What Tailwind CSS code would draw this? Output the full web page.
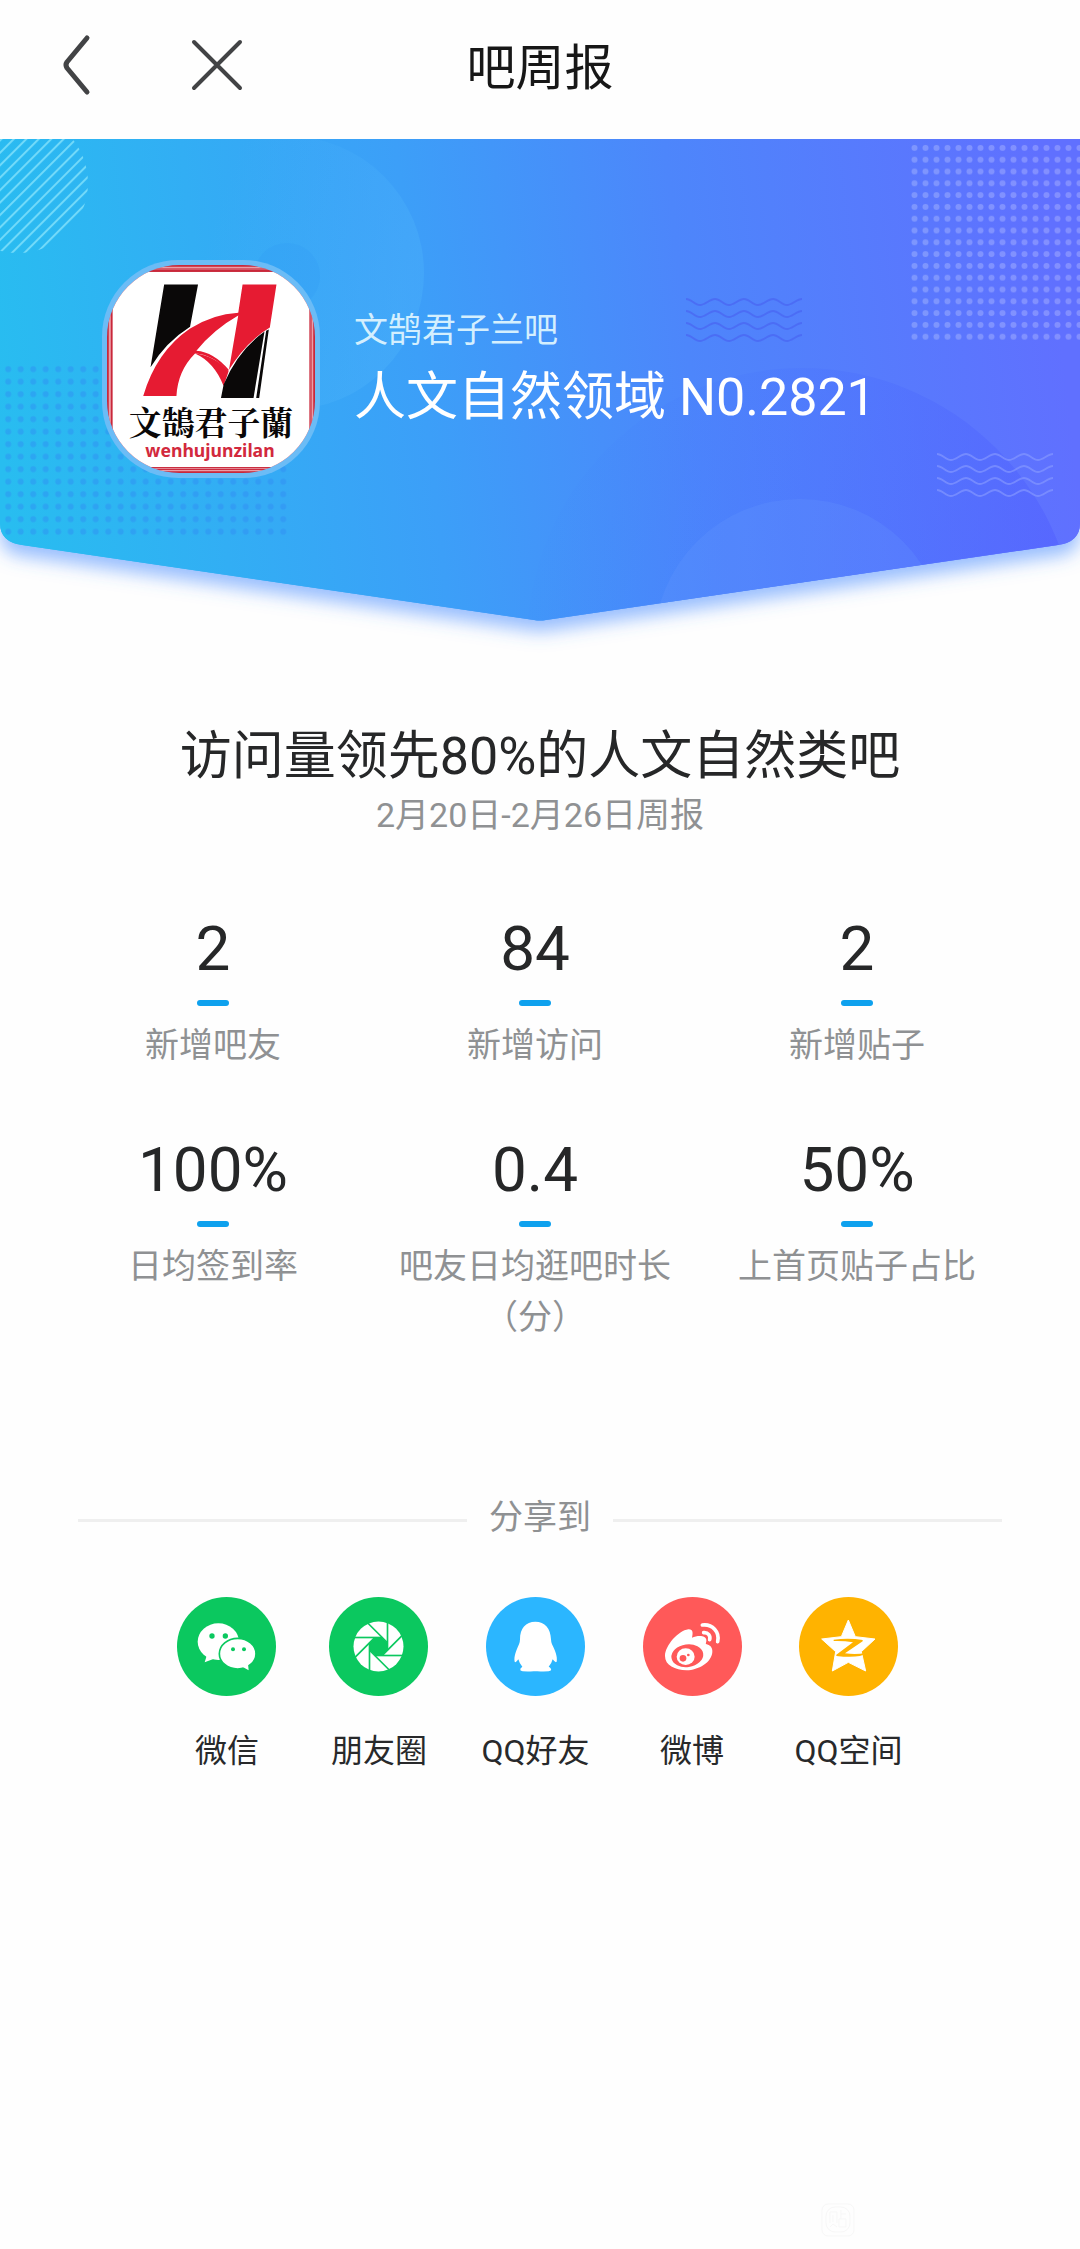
<!DOCTYPE html>
<html lang="zh-CN">
  <head>
    <meta charset="UTF-8" />
    <meta name="viewport" content="width=device-width, initial-scale=1.0" />
    <title>吧周报</title>
    <script src="https://cdn.jsdelivr.net/npm/@tailwindcss/browser@4"></script>
  </head>
  <body class="min-h-screen flex flex-col bg-[#fefefe] text-[#262728] font-[family-name:Roboto,'Noto_Sans_CJK_SC',sans-serif]">
    <!-- header -->
    <header class="grid grid-cols-[1fr_auto_1fr] items-center h-[139px] pb-[10px] px-12">
      <div class="flex items-center gap-20">
        <button type="button" aria-label="返回" class="w-14 h-16">
          <svg viewBox="0 0 56 64" fill="none" stroke="#424345" stroke-width="5" stroke-linecap="round" stroke-linejoin="round"><path d="M39 5 19 29Q17 32 19 35L39 59" /></svg>
        </button>
        <button type="button" aria-label="关闭" class="w-16 h-16">
          <svg viewBox="0 0 64 64" fill="none" stroke="#424345" stroke-width="4" stroke-linecap="round"><path d="M10 9 56 55M56 9 10 55" /></svg>
        </button>
      </div>
      <h1 class="pt-2 text-[49px] leading-[64px] text-[#171717]">吧周报</h1>
    </header>

    <main>
      <!-- banner -->
      <section class="grid">
        <svg class="[grid-area:1/1] w-full" viewBox="0 0 1080 521" aria-hidden="true">
          <defs>
            <linearGradient id="bg" gradientUnits="userSpaceOnUse" x1="0" y1="300" x2="1060" y2="180">
              <stop offset="0" stop-color="#28bdf0" />
              <stop offset="0.4" stop-color="#3c9ff8" />
              <stop offset="0.65" stop-color="#4d86fb" />
              <stop offset="1" stop-color="#6070ff" />
            </linearGradient>
            <linearGradient id="glow" x1="0" x2="1" y1="0" y2="0.3">
              <stop offset="0.3" stop-color="#4eb4fb" stop-opacity="0" />
              <stop offset="1" stop-color="#4eb4fb" stop-opacity="0.35" />
            </linearGradient>
            <linearGradient id="disc" x1="0" x2="1" y1="0" y2="0.2">
              <stop offset="0" stop-color="#3c7cff" stop-opacity="0" />
              <stop offset="1" stop-color="#4c58ff" stop-opacity="0.4" />
            </linearGradient>
            <filter id="shadow" x="-5%" y="-5%" width="110%" height="120%">
              <feDropShadow dx="0" dy="11" stdDeviation="9" flood-color="#4488ff" flood-opacity="0.55" />
            </filter>
            <pattern id="dotsDark" patternUnits="userSpaceOnUse" x="2" y="224" width="12.5" height="12.5"><circle cx="6.2" cy="6.2" r="3" fill="#2f87f3" fill-opacity="0.42" /></pattern>
            <pattern id="dotsLight" patternUnits="userSpaceOnUse" x="909" y="3" width="11" height="11.8"><circle cx="5.5" cy="5.9" r="3" fill="#fff" fill-opacity="0.22" /></pattern>
            <pattern id="stripes" patternUnits="userSpaceOnUse" width="8.8" height="8.8" patternTransform="rotate(45)"><path d="M1 0V9" stroke="#7ee0fb" stroke-opacity="0.85" stroke-width="2" /></pattern>
            <clipPath id="shape"><path d="M0 0H1080V384Q1080 403 1058 406L546 481Q540 482 534 481L22 406Q0 403 0 384Z" /></clipPath>
            <path id="waves" d="M0 0c5 0 9 6 14 6s10-6 15-6 9 6 14 6 10-6 15-6 9 6 14 6 10-6 15-6 9 6 14 6 10-6 15-6M0 12c5 0 9 6 14 6s10-6 15-6 9 6 14 6 10-6 15-6 9 6 14 6 10-6 15-6 9 6 14 6 10-6 15-6M0 24c5 0 9 6 14 6s10-6 15-6 9 6 14 6 10-6 15-6 9 6 14 6 10-6 15-6 9 6 14 6 10-6 15-6M0 36c5 0 9 6 14 6s10-6 15-6 9 6 14 6 10-6 15-6 9 6 14 6 10-6 15-6 9 6 14 6 10-6 15-6" />
          </defs>
          <path d="M0 0H1080V384Q1080 403 1058 406L546 481Q540 482 534 481L22 406Q0 403 0 384Z" fill="url(#bg)" filter="url(#shadow)" />
          <g clip-path="url(#shape)">
            <rect width="1080" height="490" fill="url(#bg)" />
            <circle cx="18" cy="44" r="70" fill="url(#stripes)" />
            <circle cx="287" cy="134" r="137" fill="url(#glow)" />
            <circle cx="287" cy="137" r="33" fill="#2f98f5" fill-opacity="0.2" />
            <circle cx="802" cy="504" r="275" fill="url(#disc)" />
            <circle cx="800" cy="506" r="146" fill="#6a9dff" fill-opacity="0.22" />
            <rect x="2" y="224" width="287" height="175" fill="url(#dotsDark)" />
            <rect x="909" y="3" width="171" height="200" fill="url(#dotsLight)" />
            <use href="#waves" x="686" y="160" fill="none" stroke="#4a68f2" stroke-opacity="0.8" stroke-width="2" />
            <use href="#waves" x="937" y="315" fill="none" stroke="#8a9dff" stroke-opacity="0.6" stroke-width="2" />
          </g>
        </svg>

        <div class="[grid-area:1/1] flex items-start gap-[34px] pt-[121px] pl-[102px]">
          <svg class="w-[218px] shrink-0" viewBox="36 45 656 656" role="img" aria-label="文鵠君子蘭">
            <clipPath id="avatar"><rect x="51" y="60" width="626" height="626" rx="218" /></clipPath>
            <rect x="36" y="45" width="656" height="656" rx="230" fill="#6bbcf6" />
            <g clip-path="url(#avatar)">
              <rect x="51" y="60" width="626" height="626" fill="#c9283b" />
              <rect x="58" y="67" width="612" height="612" fill="none" stroke="#f3b9c0" stroke-width="3" />
              <rect x="62" y="72" width="603" height="601" fill="none" stroke="#f3b9c0" stroke-width="2" />
              <rect x="68" y="81" width="592" height="587" fill="#fff" />
              <path d="M223 119H325L301 246Q228 292 182 368Z" fill="#0a0808" />
              <path d="M459 119H561L541 248Q470 290 415 380Q372 330 316 326Q264 378 260 454H160Q200 320 300 252Q370 208 446 204Z" fill="#e61b32" />
              <path d="M446 212Q372 254 320 318Q372 322 418 376L446 212Z" fill="#fff" />
              <path d="M316 326Q378 334 417 380L402 424Q374 352 316 326Z" fill="#e61b32" />
              <path d="M525 260 492 460H394L402 420Q444 318 525 260ZM538 254 509 460H500L530 258Z" fill="#0a0808" />
              <text x="364" y="572" text-anchor="middle" font-family="'Noto Serif CJK TC','Noto Sans CJK TC',serif" font-weight="700" font-size="99" fill="#0a0808">文鵠君子蘭</text>
              <text x="361" y="637" text-anchor="middle" font-family="'Noto Sans',sans-serif" font-weight="700" font-size="53" fill="#d2293d">wenhujunzilan</text>
            </g>
          </svg>
          <div class="pt-11 whitespace-nowrap">
            <p class="text-[34px] leading-[52px] text-[#d4effe]">文鹄君子兰吧</p>
            <p class="mt-1 text-[52px] leading-[76px] text-white">人文自然领域 N0.2821</p>
          </div>
        </div>
      </section>

      <!-- report -->
      <section class="mt-[63px] text-center">
        <h2 class="text-[52px] leading-[68px]">访问量领先80%的人文自然类吧</h2>
        <p class="text-[34px] leading-[48px] text-[#8f9193]">2月20日-2月26日周报</p>

        <dl class="grid grid-cols-3 gap-y-[60px] mt-[71px] pl-[52px] pr-[62px]">
          <div class="flex flex-col items-center">
            <dd class="text-[62px] leading-[78px]">2</dd>
            <dd class="w-8 h-[6px] mt-3 rounded-full bg-[#0ea1ee]"></dd>
            <dt class="mt-[14px] text-[34px] leading-[51px] text-[#8f9193]">新增吧友</dt>
          </div>
          <div class="flex flex-col items-center">
            <dd class="text-[62px] leading-[78px]">84</dd>
            <dd class="w-8 h-[6px] mt-3 rounded-full bg-[#0ea1ee]"></dd>
            <dt class="mt-[14px] text-[34px] leading-[51px] text-[#8f9193]">新增访问</dt>
          </div>
          <div class="flex flex-col items-center">
            <dd class="text-[62px] leading-[78px]">2</dd>
            <dd class="w-8 h-[6px] mt-3 rounded-full bg-[#0ea1ee]"></dd>
            <dt class="mt-[14px] text-[34px] leading-[51px] text-[#8f9193]">新增贴子</dt>
          </div>
          <div class="flex flex-col items-center">
            <dd class="text-[62px] leading-[78px]">100%</dd>
            <dd class="w-8 h-[6px] mt-3 rounded-full bg-[#0ea1ee]"></dd>
            <dt class="mt-[14px] text-[34px] leading-[51px] text-[#8f9193]">日均签到率</dt>
          </div>
          <div class="flex flex-col items-center">
            <dd class="text-[62px] leading-[78px]">0.4</dd>
            <dd class="w-8 h-[6px] mt-3 rounded-full bg-[#0ea1ee]"></dd>
            <dt class="mt-[14px] px-4 text-[34px] leading-[51px] text-[#8f9193]">吧友日均逛吧时长（分）</dt>
          </div>
          <div class="flex flex-col items-center">
            <dd class="text-[62px] leading-[78px]">50%</dd>
            <dd class="w-8 h-[6px] mt-3 rounded-full bg-[#0ea1ee]"></dd>
            <dt class="mt-[14px] text-[34px] leading-[51px] text-[#8f9193]">上首页贴子占比</dt>
          </div>
        </dl>
      </section>

      <!-- share -->
      <section class="mt-[148px]">
        <div class="flex items-center gap-[22px] px-[78px]">
          <span class="grow h-[3px] bg-[#efefef]"></span>
          <h3 class="pb-[6px] text-[34px] leading-[52px] text-[#8f9193]">分享到</h3>
          <span class="grow h-[3px] bg-[#efefef]"></span>
        </div>

        <div class="flex justify-center gap-[53px] mt-12 text-[32px] leading-[46px] text-[#28292b]">
          <button type="button" class="flex flex-col items-center gap-8">
            <svg class="w-[99px]" viewBox="51 53 297 297">
              <circle cx="199.5" cy="201.5" r="148.5" fill="#0bc85f" />
              <path d="M140 229 134 249 160 239Z" fill="#fff" />
              <ellipse cx="175" cy="187" rx="62" ry="55" fill="#fff" />
              <circle cx="156" cy="170" r="8" fill="#0bc85f" /><circle cx="196" cy="170" r="8" fill="#0bc85f" />
              <ellipse cx="233" cy="223" rx="55" ry="46" fill="#fff" stroke="#0bc85f" stroke-width="5" />
              <path d="M247 262 266 273 264 254Z" fill="#fff" />
              <circle cx="219" cy="210" r="6" fill="#0bc85f" /><circle cx="252" cy="210" r="6" fill="#0bc85f" />
            </svg>
            <span>微信</span>
          </button>
          <button type="button" class="flex flex-col items-center gap-8">
            <svg class="w-[99px]" viewBox="-148.5 -148.5 297 297">
              <circle r="148.5" fill="#0bc85f" />
              <circle r="75" fill="#fff" />
              <path d="M26 11 11 26H-11L-26 11V-11L-11-26H11L26-11Z" fill="#0bc85f" />
              <g stroke="#0bc85f" stroke-width="5">
                <path d="M27 11V-76" />
                <path d="M27 11V-76" transform="rotate(45)" />
                <path d="M27 11V-76" transform="rotate(90)" />
                <path d="M27 11V-76" transform="rotate(135)" />
                <path d="M27 11V-76" transform="rotate(180)" />
                <path d="M27 11V-76" transform="rotate(225)" />
                <path d="M27 11V-76" transform="rotate(270)" />
                <path d="M27 11V-76" transform="rotate(315)" />
              </g>
            </svg>
            <span>朋友圈</span>
          </button>
          <button type="button" class="flex flex-col items-center gap-8">
            <svg class="w-[99px]" viewBox="81 53 297 297">
              <circle cx="229.5" cy="201.5" r="148.5" fill="#2bb6ff" />
              <path d="M229 127C258 127 275 147 276 180Q276 187 279 195C288 212 296 232 293 247Q290 252 281 240Q278 252 269 262Q278 267 276 273Q272 278 235 276H224Q188 278 184 273Q182 267 190 262Q181 252 178 240Q170 252 167 247C164 232 172 212 180 195Q183 187 183 180C183 147 200 127 229 127Z" fill="#fff" />
            </svg>
            <span>QQ好友</span>
          </button>
          <button type="button" class="flex flex-col items-center gap-8">
            <svg class="w-[99px]" viewBox="549 53 297 297">
              <circle cx="697.5" cy="201.5" r="148.5" fill="#ff5959" />
              <path d="M615 230C616 198 655 154 685 150C700 149 699 162 696 175C712 168 738 167 739 182C740 188 736 191 738 194C750 197 758 204 757 218C755 250 715 272 680 273C645 272 615 258 615 230Z" fill="#fff" />
              <ellipse cx="682" cy="229" rx="48" ry="34" fill="#ff5959" transform="rotate(-8 682 229)" />
              <ellipse cx="677" cy="232" rx="27" ry="25" fill="#fff" />
              <circle cx="669" cy="237" r="10" fill="#ff5959" /><circle cx="685" cy="227" r="4" fill="#ff5959" />
              <path d="M727 137C757 133 780 158 773 187M731 160C745 159 752 169 749 181" fill="none" stroke="#fff" stroke-width="11" stroke-linecap="round" />
            </svg>
            <span>微博</span>
          </button>
          <button type="button" class="flex flex-col items-center gap-8">
            <svg class="w-[99px]" viewBox="180 53 297 297">
              <circle cx="328.5" cy="201.5" r="148.5" fill="#ffb300" />
              <path d="M328 122 349 172 408 179 367 217 380 275 328 249 280 275 290 217 248 179 307 172Z" fill="#fff" stroke="#fff" stroke-width="3" stroke-linejoin="round" />
              <path d="M284 181Q330 175 371 182V186L318 222Q350 226 382 221Q362 238 292 230V226L342 189Q315 184 284 185Z" fill="#ffb300" />
            </svg>
            <span>QQ空间</span>
          </button>
        </div>
      </section>
    </main>

    <footer class="mt-auto pb-3 pl-[76%]">
      <svg class="w-[34px]" viewBox="0 0 34 34" fill="none" stroke="#f7f7f7" aria-hidden="true">
        <rect x="1" y="1" width="32" height="32" rx="6" />
        <rect x="5" y="4" width="24" height="25" rx="9" />
        <path d="M9 20V9H16V20M12 12V19M9 24 12 21 16 24M20 7V16M20 11H25M18 16H25V24H18Z" />
      </svg>
    </footer>
  </body>
</html>
